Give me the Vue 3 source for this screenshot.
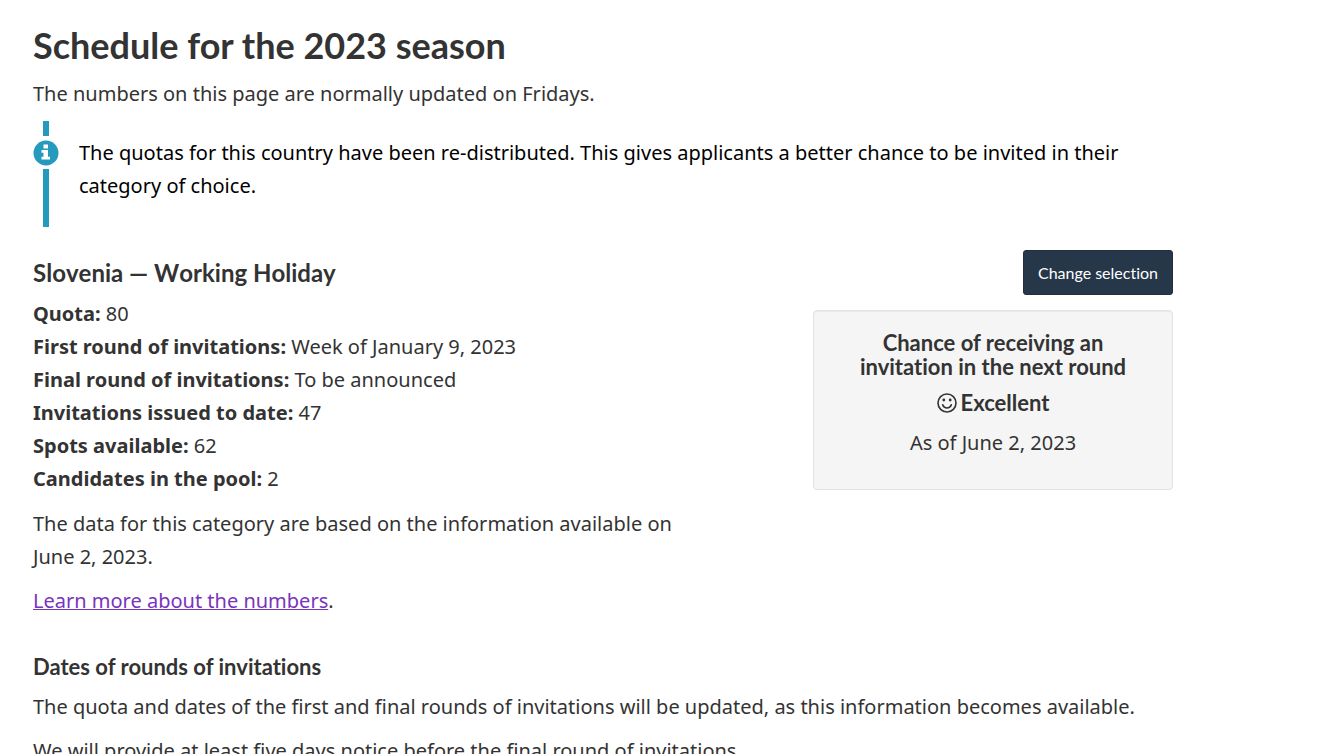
<script setup>
const facts = [
  ['Quota:', '80'],
  ['First round of invitations:', 'Week of January 9, 2023'],
  ['Final round of invitations:', 'To be announced'],
  ['Invitations issued to date:', '47'],
  ['Spots available:', '62'],
  ['Candidates in the pool:', '2'],
]
</script>

<template>
  <main class="page">
    <h2>Schedule for the 2023 season</h2>
    <p>The numbers on this page are normally updated on Fridays.</p>

    <section class="alert">
      <div class="rail" aria-hidden="true">
        <span class="bar bar-top"></span>
        <svg class="info" viewBox="0 0 26 26">
          <circle cx="13" cy="13" r="12.5" fill="#269abc" />
          <path fill="#fff" d="M10.500 4.500h4.500v4h-4.500zM8.500 10h6.500v6.800h2V19.500h-8.500v-2.700h2V12.700h-2z" />
        </svg>
        <span class="bar bar-bottom"></span>
      </div>
      <p>The quotas for this country have been re-distributed. This gives applicants a better chance to be invited in their category of choice.</p>
    </section>

    <header class="category">
      <h3>Slovenia — Working Holiday</h3>
      <button type="button">Change selection</button>
    </header>

    <div class="columns">
      <div class="details">
        <ul>
          <li v-for="[label, value] in facts" :key="label"><strong>{{ label }}</strong> {{ value }}</li>
        </ul>
        <p>The data for this category are based on the information available on June 2, 2023.</p>
        <p><a href="#numbers">Learn more about the numbers</a>.</p>
      </div>
      <aside class="chance">
        <h4>Chance of receiving an invitation in the next round</h4>
        <h4 class="rating">
          <svg viewBox="0 0 20 20" aria-hidden="true">
            <circle cx="10" cy="10" r="9" fill="none" stroke="#333" stroke-width="1.600" />
            <circle cx="6.800" cy="7" r="1.400" fill="#333" />
            <circle cx="13.200" cy="7" r="1.400" fill="#333" />
            <path d="M5.700 11.800C6.500 14.200 8.200 15 10 15s3.500-.8 4.300-3.200" fill="none" stroke="#333" stroke-width="1.600" stroke-linecap="round" />
          </svg>
          Excellent
        </h4>
        <p>As of June 2, 2023</p>
      </aside>
    </div>

    <section class="dates">
      <h4>Dates of rounds of invitations</h4>
      <p>The quota and dates of the first and final rounds of invitations will be updated, as this information becomes available.</p>
      <p>We will provide at least five days notice before the final round of invitations.</p>
    </section>
  </main>
</template>

<style>
body {
  background: #fff;
}
html {
  overflow: hidden;
}
</style>

<style scoped>
.page {
  box-sizing: border-box;
  max-width: 1205px;
  padding: 26px 32px 0 33px;
  color: #333;
  font: 20px/33px "Noto Sans", sans-serif;
}
h2, h3, h4 {
  margin: 0;
  font-family: Lato, sans-serif;
  font-weight: 700;
  font-variant-ligatures: none;
}
h2 {
  font-size: 36px;
  line-height: 38px;
}
h3 {
  font-size: 24px;
  line-height: 26px;
  font-kerning: none;
}
h4 {
  font-size: 22px;
  line-height: 24px;
}
p {
  margin: 0 0 11px;
}
h2 + p {
  margin-top: 13px;
}
.alert {
  display: flex;
  gap: 20px;
  color: #000;
}
.alert p {
  margin: 15px 0 40px;
}
.rail {
  display: flex;
  flex: 0 0 26px;
  flex-direction: column;
  align-items: center;
}
.bar {
  width: 6px;
  background: #269abc;
}
.bar-top {
  height: 15px;
}
.info {
  width: 26px;
  height: 26px;
  margin: 4px 0 3px;
}
.bar-bottom {
  height: 58px;
}
.category {
  display: flex;
  align-items: center;
  justify-content: space-between;
  height: 45px;
  margin-top: 8px;
}
button {
  box-sizing: border-box;
  height: 45px;
  padding: 0 14px;
  border: 1px solid #222d3d;
  border-radius: 3px;
  background: #26374a;
  color: #fff;
  font: 16px/23px Lato, sans-serif;
  font-variant-ligatures: none;
}
.columns {
  display: flex;
  align-items: flex-start;
  justify-content: space-between;
}
.details {
  flex: 0 1 650px;
  margin-top: 2px;
}
ul {
  margin: 0 0 12px;
  padding: 0;
  list-style: none;
}
a {
  color: #7834bc;
  text-decoration-thickness: 1px;
}
.chance {
  box-sizing: border-box;
  flex: 0 0 360px;
  margin-top: 15px;
  padding: 20px 40px 19px;
  border: 1px solid #e3e3e3;
  border-radius: 4px;
  background: #f5f5f5;
  box-shadow: inset 0 1px 1px rgba(0, 0, 0, 0.05);
  text-align: center;
}
.rating {
  display: flex;
  align-items: center;
  justify-content: center;
  gap: 4px;
  margin: 12px 0 11px;
}
.rating svg {
  width: 20px;
  height: 20px;
}
.dates {
  margin-top: 27px;
}
.dates h4 {
  margin-bottom: 11px;
}
</style>
